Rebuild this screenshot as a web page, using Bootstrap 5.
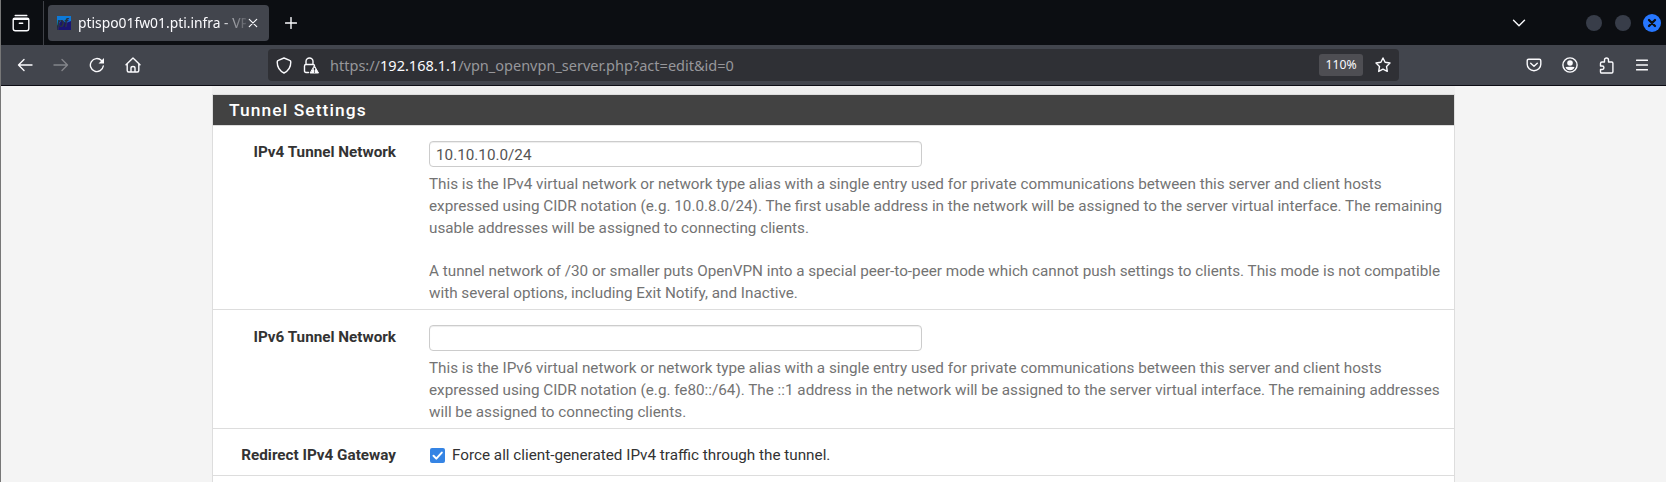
<!DOCTYPE html>
<html lang="en">
<head>
<meta charset="utf-8">
<title>ptispo01fw01.pti.infra - VPN</title>
<link href="https://cdn.jsdelivr.net/npm/bootstrap@5.3.0/dist/css/bootstrap.min.css" rel="stylesheet">
<style>
body{background:#f4f4f4;font-family:Roboto,sans-serif;font-size:15.255px;line-height:22px;color:#333;height:482px;overflow:hidden;border-left:1px solid #777}
svg{display:block;flex:none;fill:none;stroke:#fbfbfe;stroke-width:1.4;stroke-linecap:round;stroke-linejoin:round}
.chrome{font-family:"Noto Sans",sans-serif;color:#fbfbfe}
.tabstrip{height:45px;background:#0c0e12}
.sep{width:1px;height:44px;background:#3f4147;margin-left:13px}
.tab{width:221px;height:36px;background:#42454d;border-radius:4px;margin-left:4px;padding-left:9px;padding-right:10px;font-size:13.85px}
.tabtitle{width:168px;margin-left:7px;white-space:nowrap;-webkit-mask-image:linear-gradient(90deg,#000 140px,transparent 172px)}
.toolbar{height:40px;background:#42454d}
.edge{height:1px;background:#0c0c14}
.urlbar{width:1131px;height:32px;background:#2f3035;border-radius:4px;margin-left:127px;padding-left:8px;padding-right:8px;font-size:14.52px}
.url{margin-left:10px;color:#97979b;white-space:nowrap}
.url b{font-weight:400;color:#fbfbfe}
.zoomlvl{width:44px;height:22px;background:#4e4e53;border-radius:3px;font-size:12.2px;line-height:22px}
.wm{width:16px;height:16px;border-radius:50%;background:#383d49}
.wx{width:18px;height:18px;border-radius:50%;background:#2777ff}
.band{width:1243px;height:8px;margin-left:211px;background:linear-gradient(#f0f0f0,#eee)}
.settings{width:1243px;margin-left:211px;border:1px solid #ddd;border-bottom:0;background:#fff}
.settings h2{height:30px;background:#424242;color:#fff;font-size:17.4px;line-height:30px;font-weight:500;letter-spacing:1.1px;padding-left:16px;margin:0}
.setting{border-top:1px solid #ddd;padding-top:15px}
.lbl{width:183px;margin-right:33px;text-align:right;font-weight:700;flex:none}
.fld{flex:1;color:#737373;white-space:nowrap}
.para{margin-top:21px}
.form-control.tin{width:493px;height:26px;padding:1px 6px 0;border:1px solid #ccc;border-radius:4px;font-size:15.255px;line-height:23px;color:#555;box-shadow:inset 0 1px 1px rgba(0,0,0,.075);margin-bottom:6px}
.check{width:15px;height:15px;background:#3584e4;border-radius:2px}
</style>
</head>
<body>
<header class="chrome">
 <div class="tabstrip d-flex align-items-center">
  <svg width="18" height="18" viewBox="0 0 18 18" style="margin-left:11px"><path d="M3.2 1.5h11.6M1.2 5.2h15.6M2.7 4.2h12.6q1.5 0 1.5 1.5v8.800q0 2.200-2.200 2.200H3.400q-2.200 0-2.200-2.200V5.700q0-1.500 1.500-1.500zM7.300 9.200h3.400"/></svg>
  <div class="sep"></div>
  <div class="tab d-flex align-items-center">
   <svg width="14" height="14" viewBox="0 0 14 14" style="stroke:none"><path fill="#1a1572" d="M0 0h14v14H0z"/><path fill="#0d79d8" d="M0 0h14v5L9 7 5 4 0 10z"/><text x="0" y="10.5" font-family="Liberation Sans" font-size="12" font-weight="700" font-style="italic" fill="#293141">pf</text></svg>
   <span class="tabtitle">ptispo01fw01.pti.infra - VP</span>
   <svg width="10" height="10" viewBox="0 0 10 10" style="stroke-width:1.2;margin-left:2px"><path d="M1.300 1.300l7.400 7.400M8.700 1.300l-7.400 7.400"/></svg>
  </div>
  <svg width="12" height="12" viewBox="0 0 12 12" style="margin-left:16px"><path d="M6 .6v10.800M.6 6h10.800"/></svg>
  <svg class="ms-auto" width="14" height="8" viewBox="0 0 14 8"><path d="M1.500 1.200L7 6.700l5.500-5.500"/></svg>
  <span class="wm" style="margin-left:60px"></span><span class="wm" style="margin-left:13px"></span>
  <span class="wx d-flex align-items-center justify-content-center" style="margin-left:12px;margin-right:5px"><svg width="10" height="10" viewBox="0 0 10 10" style="stroke:#0c0e12;stroke-width:2.300"><path d="M2 2l6 6M8 2L2 8"/></svg></span>
 </div>
 <div class="toolbar d-flex align-items-center">
  <svg width="16" height="14" viewBox="0 0 16 14" style="margin-left:16px"><path d="M15 7H1.500M7 1.500L1.500 7 7 12.500"/></svg>
  <svg width="16" height="14" viewBox="0 0 16 14" style="margin-left:20px;stroke:#83858a"><path d="M1 7h13.500M9 1.500L14.500 7 9 12.500"/></svg>
  <svg width="16" height="16" viewBox="0 0 16 16" style="margin-left:20px"><path d="M14.300 9A6.500 6.500 0 1 1 12.500 3.500L14 5"/><path fill="#fbfbfe" stroke="none" d="M15 1v5.500H9.500z"/></svg>
  <svg width="16" height="16" viewBox="0 0 16 16" style="margin-left:20px"><path d="M1 7.700L8 1l7 6.700M2.200 7v6.500q0 1.500 1.500 1.500h8.600q1.500 0 1.500-1.500V7M6 15v-4q0-1.500 2-1.500t2 1.500v4"/></svg>
  <div class="urlbar d-flex align-items-center">
   <svg width="16" height="17" viewBox="0 0 16 17"><path d="M8 1l5.700 2.300q1.100.4 1.100 1.700C14.800 10 12 14 8 16 4 14 1.200 10 1.200 5q0-1.300 1.100-1.700z"/></svg>
   <svg width="17" height="17" viewBox="0 0 17 17" style="margin-left:11px"><path d="M5.500 15.500H3q-1.500 0-1.500-1.500V9q0-1.500 1.500-1.500h7q1.500 0 1.500 1M3 7.500V4.500a3.500 3.500 0 0 1 7 0v3"/><path fill="#fbfbfe" stroke-width="1" d="M11.500 9l4 7h-8z"/><path stroke="#2f3035" stroke-width="1.300" d="M11.500 11.500v1.600M11.500 15v.1"/></svg>
   <span class="url">https://<b>192.168.1.1</b>/vpn_openvpn_server.php?act=edit&amp;id=0</span>
   <span class="zoomlvl ms-auto text-center">110%</span>
   <svg width="16" height="16" viewBox="0 0 16 16" style="margin-left:12px"><path d="M8 1l2.100 4.300 4.900.7-3.500 3.400.8 5L8 12.100l-4.300 2.300.8-5L1 6l4.900-.7z"/></svg>
  </div>
  <svg class="ms-auto" width="16" height="14" viewBox="0 0 16 14"><path d="M2.700 1.200h10.600q1.500 0 1.500 1.500v3.500A6.800 6.500 0 0 1 1.200 6.200V2.700q0-1.500 1.500-1.500zM4.700 5.200L8 8.300l3.300-3.100"/></svg>
  <svg width="16" height="16" viewBox="0 0 16 16" style="margin-left:20px"><circle cx="8" cy="8" r="7.100"/><circle cx="8" cy="6" r="2.800" fill="#fbfbfe" stroke="none"/><path fill="#fbfbfe" stroke="none" d="M3.500 10q4.500-.6 9 0-1 3.200-4.500 3.200T3.500 10z"/></svg>
  <svg width="15" height="17" viewBox="0 0 15 17" style="margin-left:21px"><path d="M1.500 9V6.500q0-1.500 1.500-1.500h2.500V3a2 2 0 0 1 4 0v2h3.200q1.200 0 1.200 1.200v8.600q0 1.200-1.200 1.200H2.700q-1.200 0-1.200-1.200V12.500h1.700a1.700 1.700 0 0 0 0-3.500z"/></svg>
  <svg width="12" height="12" viewBox="0 0 12 12" style="margin-left:22px;margin-right:18px"><path d="M.6 1.200h10.800M.6 6h10.800M.6 10.800h10.800"/></svg>
 </div>
 <div class="edge"></div>
</header>
<div class="band"></div>
<main class="settings">
 <h2>Tunnel Settings</h2>
 <div class="setting d-flex" style="height:184px">
  <label class="lbl" for="v4">IPv4 Tunnel Network</label>
  <div class="fld"><input id="v4" class="form-control tin" value="10.10.10.0/24">
   This is the IPv4 virtual network or network type alias with a single entry used for private communications between this server and client hosts<br>expressed using CIDR notation (e.g. 10.0.8.0/24). The first usable address in the network will be assigned to the server virtual interface. The remaining<br>usable addresses will be assigned to connecting clients.<div class="para">A tunnel network of /30 or smaller puts OpenVPN into a special peer-to-peer mode which cannot push settings to clients. This mode is not compatible<br>with several options, including Exit Notify, and Inactive.</div></div>
 </div>
 <div class="setting d-flex" style="height:119px">
  <label class="lbl pt-px" for="v6" style="padding-top:1px">IPv6 Tunnel Network</label>
  <div class="fld"><input id="v6" class="form-control tin">
   This is the IPv6 virtual network or network type alias with a single entry used for private communications between this server and client hosts<br>expressed using CIDR notation (e.g. fe80::/64). The ::1 address in the network will be assigned to the server virtual interface. The remaining addresses<br>will be assigned to connecting clients.</div>
 </div>
 <div class="setting d-flex" style="height:47px">
  <div class="lbl">Redirect IPv4 Gateway</div>
  <div class="d-flex align-items-center" style="height:22px"><span class="check" style="margin:1px 7px 0 1px"><svg width="15" height="15" viewBox="0 0 15 15" style="stroke:#fff;stroke-width:2"><path d="M3.500 7.800l2.800 2.800 5.500-6"/></svg></span>Force all client-generated IPv4 traffic through the tunnel.</div>
 </div>
 <div class="setting" style="height:20px"></div>
</main>
<script src="https://cdn.jsdelivr.net/npm/bootstrap@5.3.0/dist/js/bootstrap.bundle.min.js"></script>
</body>
</html>
